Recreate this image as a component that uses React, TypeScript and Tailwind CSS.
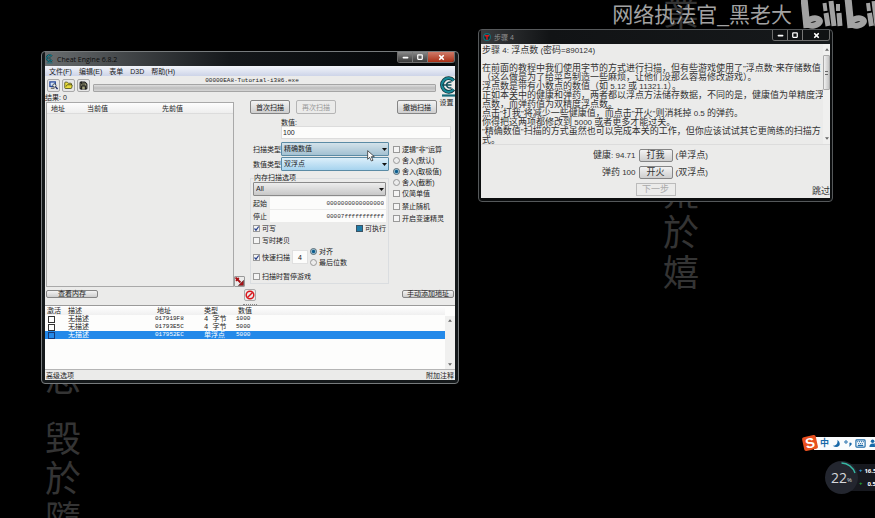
import React, { useState } from 'react'
import { FolderOpen, Save, Keyboard, Minus, Square, X } from 'lucide-react'
import clsx from 'clsx'

type CheckProps = {
  label: string;
  defaultChecked?: boolean;
  filled?: boolean;
};

type RadioProps = {
  label: string;
  name: string;
  defaultChecked?: boolean;
};

type ComboProps = {
  id: string;
  options: string[];
  tone: 'blue' | 'sky' | 'gray';
  label?: string;
};

type Entry = {
  description: string;
  address: string;
  type: string;
  value: string;
};

const entries: Entry[] = [
  { description: '无描述', address: '017919F8', type: '4 字节', value: '1000' },
  { description: '无描述', address: '01793E5C', type: '4 字节', value: '5000' },
  { description: '无描述', address: '017952EC', type: '单浮点', value: '5000' },
]

const tutorialLines = [
  '步骤 4: 浮点数 (密码=890124)',
  '',
  '在前面的教程中我们使用字节的方式进行扫描，但有些游戏使用了"浮点数"来存储数值',
  '（这么做是为了给菜鸟制造一些麻烦，让他们没那么容易修改游戏）。',
  '浮点数是带有小数点的数值（如 5.12 或 11321.1）。',
  '正如本关中的健康和弹药，两者都以浮点方法储存数据，不同的是，健康值为单精度浮',
  '点数，而弹药值为双精度浮点数。',
  '点击"打我"将减少一些健康值，而点击"开火"则消耗掉 0.5 的弹药。',
  '你得把这两项都修改到 5000 或者更多才能过关。',
  '"精确数值"扫描的方式虽然也可以完成本关的工作，但你应该试试其它更简练的扫描方',
  '式。',
]

const comboTones = {
  blue: 'border-[#5b8ba5] bg-linear-to-b from-[#d3e2ea] to-[#a3c1d2]',
  sky: 'border-[#5b8ba5] bg-linear-to-b from-[#dceffa] to-[#a6d3ee]',
  gray: 'border-[#8a8a8a] bg-linear-to-b from-[#ededed] to-[#c8c8c8]',
}

const buttonBase =
  'border border-[#858585] rounded-[2px] bg-linear-to-b from-[#f3f3f3] to-[#cecece] text-center whitespace-nowrap'

// Latin runs are set a step smaller, about half the width of a Chinese glyph
function Mixed({ text }: { text: string }) {
  return (
    <>
      {text.split(/([\x20-\x7e]+)/).map((part, i) =>
        i % 2 ? <span key={i} className="text-[8px]">{part}</span> : part
      )}
    </>
  )
}

function Check({ label, defaultChecked, filled }: CheckProps) {
  return (
    <label className="flex items-center gap-[2px] whitespace-nowrap">
      <span className="grid size-[7px] shrink-0">
        <input
          type="checkbox"
          defaultChecked={defaultChecked}
          className={clsx(
            'peer col-start-1 row-start-1 appearance-none size-[7px] border',
            filled ? 'bg-[#1f7ca8] border-[#3b5364]' : 'bg-[#f4f4f4] border-[#999]'
          )}
        />
        <svg viewBox="0 0 7 7" className="col-start-1 row-start-1 hidden size-[7px] pointer-events-none peer-checked:block">
          <path d="M1.5 3.5 L3 5.2 L5.7 1.5" fill="none" stroke="#27408c" strokeWidth="1.2" />
        </svg>
      </span>
      {label}
    </label>
  )
}

function Radio({ label, name, defaultChecked }: RadioProps) {
  return (
    <label className="flex items-center gap-[2px] whitespace-nowrap">
      <input
        type="radio"
        name={name}
        defaultChecked={defaultChecked}
        className="appearance-none size-[7px] shrink-0 rounded-full border border-[#999] bg-[#ececec] checked:border-[#4e6470] checked:bg-[radial-gradient(circle,#0d5c8c_35%,#b9d8e6_65%)]"
      />
      {label}
    </label>
  )
}

function Combo({ id, options, tone, label }: ComboProps) {
  return (
    <div className="relative flex-1">
      <select
        id={id}
        aria-label={label}
        className={clsx('block w-full h-[14px] appearance-none border rounded-[1px] pl-[2px] leading-[12px]', comboTones[tone])}
      >
        {options.map((option) => (
          <option key={option}>{option}</option>
        ))}
      </select>
      <svg viewBox="0 0 5 3" className="absolute right-[2px] top-[6px] w-[5px] h-[3px] pointer-events-none">
        <path d="M0 0 H5 L2.5 3 Z" fill="#111" />
      </svg>
    </div>
  )
}

function EngineLogo({ className }: { className: string }) {
  const ring = 'M14.6 4.6 A6.6 6.8 0 1 0 14.6 13.4'
  const bars = 'M3 9 H12.5 M12.5 6 Q8 5.5 7.5 9 Q8 12.5 12.5 12'
  return (
    <svg viewBox="0 0 16 22" className={className}>
      <path d={ring} fill="none" stroke="#12313a" strokeWidth="3.8" />
      <path d={ring} fill="none" stroke="#178a98" strokeWidth="2.2" />
      <path d={bars} fill="none" stroke="#12515c" strokeWidth="1.5" />
      <path d="M3 19.5 H16" stroke="#156b7a" strokeWidth="2.2" />
    </svg>
  )
}

function WindowControls({ danger }: { danger?: boolean }) {
  const cell = 'flex items-center justify-center h-[10px] border-r border-[#777]'
  return (
    <div className="flex self-start border border-t-0 border-[#6d6d6d] rounded-b-[3px] overflow-hidden text-white">
      <button aria-label="最小化" className={clsx(cell, 'w-[15px]', danger ? 'bg-linear-to-b from-[#8a8a8a] to-[#3a3a3a]' : 'bg-[#101214]')}>
        <Minus className="size-[7px]" strokeWidth={6} />
      </button>
      <button aria-label="最大化" className={clsx(cell, 'w-[15px]', danger ? 'bg-linear-to-b from-[#8a8a8a] to-[#3a3a3a]' : 'bg-[#101214]')}>
        <Square className="size-[6px]" strokeWidth={5} />
      </button>
      <button aria-label="关闭" className={clsx('flex items-center justify-center h-[10px] w-[26px]', danger ? 'bg-linear-to-b from-[#cf7a68] to-[#a82c10]' : 'bg-[#101214]')}>
        <X className="size-[7px]" strokeWidth={6} />
      </button>
    </div>
  )
}

function ScrollArrow({ up }: { up?: boolean }) {
  return (
    <svg viewBox="0 0 5 3" className="w-[4px] h-[3px]">
      <path d={up ? 'M0 3 H5 L2.5 0 Z' : 'M0 0 H5 L2.5 3 Z'} fill="#666" />
    </svg>
  )
}

function ScanOptions() {
  return (
    <div className="flex-1 pt-[7px] pr-[4px] pb-[3px]">
      <div className="flex items-center pr-[14px]">
        <button className={clsx(buttonBase, 'w-[40px] h-[14px]')}>首次扫描</button>
        <button disabled className="ml-[6px] w-[40px] h-[14px] border border-[#b5b5b5] rounded-[2px] text-[#999]">再次扫描</button>
        <button className={clsx(buttonBase, 'ml-auto w-[40px] h-[14px]')}>撤销扫描</button>
      </div>
      <div className="pl-[31px] pt-[4px]">
        <label htmlFor="value" className="block h-[8px] leading-[9px]">数值:</label>
        <input id="value" defaultValue="100" className="block w-full h-[13px] bg-[#fcfcfb] border border-[#dcdcdc] pl-[1px]" />
      </div>

      <div className="flex gap-[4px] pt-[3px]">
        <div className="w-[139px] flex flex-col">
          <div className="flex items-center">
            <label htmlFor="scan-type" className="w-[31px] pl-[3px] whitespace-nowrap">扫描类型</label>
            <Combo id="scan-type" options={['精确数值']} tone="blue" />
          </div>
          <div className="flex items-center mt-px">
            <label htmlFor="value-type" className="w-[31px] pl-[3px] whitespace-nowrap">数值类型</label>
            <Combo id="value-type" options={['双浮点']} tone="sky" />
          </div>

          <fieldset className="mt-[3px] border border-[#dadde0] px-[2px]">
            <legend className="h-[8px] leading-[8px] ml-px">内存扫描选项</legend>
            <div className="flex">
              <Combo id="region" label="内存扫描选项" options={['All']} tone="gray" />
            </div>
            <div className="flex items-center mt-px">
              <label htmlFor="start" className="w-[17px]">起始</label>
              <input id="start" defaultValue="0000000000000000" className="min-w-0 flex-1 h-[12px] bg-[#fcfcfb] px-[2px] text-right text-[6px] text-[#333] font-['Liberation_Mono',monospace]" />
            </div>
            <div className="flex items-center mt-px">
              <label htmlFor="stop" className="w-[17px]">停止</label>
              <input id="stop" defaultValue="00007fffffffffff" className="min-w-0 flex-1 h-[12px] bg-[#fcfcfb] px-[2px] text-right text-[6px] text-[#333] font-['Liberation_Mono',monospace]" />
            </div>
            <div className="flex items-center justify-between h-[13px]">
              <Check label="可写" defaultChecked />
              <Check label="可执行" filled />
            </div>
            <div className="flex items-center h-[10px]">
              <Check label="写时拷贝" />
            </div>
            <div className="flex items-center h-[24px]">
              <Check label="快速扫描" defaultChecked />
              <input aria-label="对齐值" defaultValue="4" className="ml-[2px] w-[16px] h-[14px] bg-[#fcfcfb] border border-[#e0e0e0] text-center" />
              <div className="ml-[2px]">
                <div className="h-[11px] flex items-center"><Radio name="align" label="对齐" defaultChecked /></div>
                <div className="h-[11px] flex items-center"><Radio name="align" label="最后位数" /></div>
              </div>
            </div>
            <div className="flex items-center h-[14px]">
              <Check label="扫描时暂停游戏" />
            </div>
          </fieldset>
        </div>

        <div className="pt-[2px] *:h-[11px]">
          <Check label='逻辑"非"运算' />
          <Radio name="rounding" label="舍入(默认)" />
          <Radio name="rounding" label="舍入(取极值)" defaultChecked />
          <Radio name="rounding" label="舍入(截断)" />
          <Check label="仅简单值" />
          <div className="mt-[3px]"><Check label="禁止随机" /></div>
          <Check label="开启变速精灵" />
        </div>
      </div>
    </div>
  )
}

function AddressList() {
  const [selected, setSelected] = useState(2)

  return (
    <div className="flex h-[63px] bg-[#fdfdfc]">
      <div className="flex-1">
        <table className="w-full table-fixed border-collapse leading-[8px]">
          <thead>
            <tr className="h-[9px] text-left bg-linear-to-b from-white to-[#f0f0f0]">
              <th className="w-[23px] pl-[2px] font-normal whitespace-nowrap">激活</th>
              <th className="w-[87px] font-normal">描述</th>
              <th className="w-[49px] pl-[2px] font-normal">地址</th>
              <th className="w-[32px] font-normal">类型</th>
              <th className="pl-[2px] font-normal">数值</th>
            </tr>
          </thead>
          <tbody>
            {entries.map((entry, i) => (
              <tr
                key={entry.address}
                onClick={() => setSelected(i)}
                className={clsx('h-[8px]', selected === i && 'bg-[#2389e9] text-white')}
              >
                <td className="pl-[3px] align-middle">
                  <input
                    type="checkbox"
                    aria-label={entry.address}
                    className={clsx('block appearance-none size-[7px] border', selected === i ? 'border-[#163a78]' : 'border-[#333]')}
                  />
                </td>
                <td>{entry.description}</td>
                <td className="text-[6px] font-['Liberation_Mono',monospace]">{entry.address}</td>
                <td className="whitespace-nowrap font-['Liberation_Mono','Noto_Sans_CJK_SC',monospace]">{entry.type}</td>
                <td className="text-[6px] font-['Liberation_Mono',monospace]">{entry.value}</td>
              </tr>
            ))}
          </tbody>
        </table>
      </div>
      <div className="w-[10px] mt-[10px] bg-[#f0f0ef] flex flex-col items-center justify-between py-[3px]">
        <ScrollArrow up />
        <ScrollArrow />
      </div>
    </div>
  )
}

function CheatEngineWindow() {
  const tool = 'flex items-center justify-center size-[13px] border border-[#a9a9a9] rounded-[2px] bg-[#e6e6e6]'
  return (
    <section className="absolute left-[41px] top-[51px] w-[418px] rounded-[4px] border border-[#777b7d] bg-[#15191b] px-[3px] pb-[3px] text-[7px] leading-[9px] text-[#222]">
      <header className="flex items-center h-[14px] bg-linear-to-r from-[#6a6e70] via-[#15181b] via-45% to-[#030405]">
        <EngineLogo className="w-[8px] h-[10px]" />
        <h1 className="ml-[4px] flex-1 text-[7px] text-[#0c0c0c] font-['Open_Sans',sans-serif]">Cheat Engine 6.8.2</h1>
        <WindowControls danger />
      </header>

      <div className="bg-[#ebebea]">
        <nav className="flex items-center gap-[7px] h-[10px] pl-[4px] bg-linear-to-b from-[#f3f5fa] to-[#cdd4e8]">
          <button>文件(F)</button>
          <button>编辑(E)</button>
          <button>表单</button>
          <button>D3D</button>
          <button>帮助(H)</button>
        </nav>

        <div className="flex items-start h-[17px] pl-[2px]">
          <div className="flex gap-[2px] pt-[3px]">
            <button aria-label="选择进程" className={tool}>
              <svg viewBox="0 0 10 10" className="size-[9px]">
                <rect x="1" y="1" width="6" height="5" fill="#cfe0f6" stroke="#25479b" strokeWidth="1.4" />
                <path d="M2 8 H6" stroke="#333" />
                <circle cx="6" cy="5" r="1.8" fill="#e9f5ff" stroke="#222" strokeWidth="0.8" />
                <path d="M7.4 6.5 L9.5 9" stroke="#1b2c6b" strokeWidth="1.6" />
              </svg>
            </button>
            <button aria-label="打开" className={tool}>
              <FolderOpen className="size-[9px] text-[#3b3d11]" fill="#e9dc3c" strokeWidth={2} />
            </button>
            <button aria-label="保存" className={tool}>
              <Save className="size-[9px] text-[#1c1c1c]" fill="#a3a27a" strokeWidth={3} />
            </button>
          </div>
          <div className="flex-1 ml-[3px]">
            <p className="h-[8px] pr-[25px] text-center text-[6px] leading-[9px] font-['Liberation_Mono',monospace]">00000EA8-Tutorial-i386.exe</p>
            <div className="h-[8px] border border-[#a5a5a5] rounded-[1px] bg-linear-to-b from-[#dedede] via-[#bdbdbd] to-[#d5d5d5]" />
          </div>
          <button className="ml-[2px] -mb-[14px] w-[17px] flex flex-col items-center">
            <EngineLogo className="w-[16px] h-[22px]" />
            <span className="text-[7px] leading-[9px] whitespace-nowrap">设置</span>
          </button>
        </div>

        <div className="flex">
          <div className="w-[189px] flex flex-col">
            <p className="h-[9px]">结果: 0</p>
            <div className="flex-1 ml-px border border-[#a9a9a9] bg-[#ebebea]">
              <div className="flex items-center h-[11px] bg-linear-to-b from-[#fdfdfd] to-[#eeeeee] border-b border-[#dcdcdc]">
                <span className="w-[40px] pl-[4px]">地址</span>
                <span className="w-[75px]">当前值</span>
                <span>先前值</span>
              </div>
            </div>
          </div>
          <button aria-label="添加到列表" className="self-end mr-[5px] flex items-center justify-center size-[11px] border border-[#999] rounded-[1px]">
            <svg viewBox="0 0 9 9" className="size-[9px]">
              <path d="M0.5 0.5 L5.5 5.5 M1 3.8 L3.8 1" stroke="#a80f14" strokeWidth="1.8" />
              <path d="M8.6 8.6 V3.3 L3.3 8.6 Z" fill="#a80f14" stroke="#222" strokeWidth="0.4" />
            </svg>
          </button>
          <ScanOptions />
        </div>

        <div className="flex items-start h-[17px] pt-[3px] pr-px pl-px">
          <button className={clsx(buttonBase, 'w-[52px] h-[8px] leading-[6px]')}>查看内存</button>
          <button aria-label="清空列表" className="ml-[146px] -mt-px flex items-center justify-center size-[12px] border border-[#aaa] rounded-[2px]">
            <svg viewBox="0 0 10 10" className="size-[10px]">
              <circle cx="5" cy="5" r="3.8" fill="none" stroke="#d8171d" strokeWidth="1.5" />
              <path d="M2.5 7.5 L7.5 2.5" stroke="#d8171d" strokeWidth="1.5" />
            </svg>
          </button>
          <button className={clsx(buttonBase, 'ml-auto w-[52px] h-[8px] leading-[6px]')}>手动添加地址</button>
        </div>
        <div className="flex justify-center h-[2px] border-b border-[#9a9a9a]">
          <span className="w-[14px] border-t border-dotted border-[#888]" />
        </div>

        <AddressList />

        <footer className="flex items-center justify-between h-[11px] border-t border-[#b5b5b5] px-px">
          <button>高级选项</button>
          <button>附加注释</button>
        </footer>
      </div>
    </section>
  )
}

function TutorialWindow() {
  const [health, setHealth] = useState(94.71)
  const [ammo, setAmmo] = useState(100)

  return (
    <section className="absolute left-[478px] top-[29px] w-[355px] rounded-[4px] border border-[#55585a] bg-[#0b0d0e] px-[2px] pb-[3px] text-[9px] leading-[9px] text-[#333]">
      <header className="flex items-center h-[14px] pl-[2px] bg-linear-to-r from-[#3a3c3e] via-[#111315] via-20% to-[#16191b]">
        <svg viewBox="0 0 9 9" className="size-[8px]">
          <circle cx="4.5" cy="4.5" r="3.8" fill="#082f35" stroke="#17707a" strokeWidth="1.2" />
          <path d="M2 3 H7 M4.5 3 V7.5" stroke="#e01818" strokeWidth="1.6" />
        </svg>
        <h2 className="ml-[3px] flex-1 text-[7px] text-[#909090]">步骤 4</h2>
        <WindowControls />
      </header>

      <div className="bg-[#ebebea]">
        <div className="flex h-[101px] border-b border-[#dcdcdc]">
          <div className="flex-1 w-0 pt-[2px] pl-px whitespace-nowrap">
            {tutorialLines.map((line, i) => (
              <p key={i} className="h-[9px]"><Mixed text={line} /></p>
            ))}
          </div>
          <div className="w-[7px] flex flex-col items-center py-[4px] bg-[#f0f0ef]">
            <ScrollArrow up />
            <div className="mt-[4px] mb-auto w-full h-[35px] flex items-center justify-center border border-[#aaa] rounded-[1px] bg-linear-to-r from-[#f0f0f0] to-[#c4c4c4]">
              <span className="w-[3px] h-[4px] border-y border-[#666]" />
            </div>
            <ScrollArrow />
          </div>
        </div>

        <div className="grid grid-cols-[1fr_34px_1fr] items-center gap-x-[3px] gap-y-[4px] pt-[4px]">
          <span className="text-right"><Mixed text={`健康: ${health}`} /></span>
          <button className={clsx(buttonBase, 'h-[13px]')} onClick={() => setHealth(health - 1)}>打我</button>
          <span><Mixed text="(单浮点)" /></span>
          <span className="text-right"><Mixed text={`弹药 ${ammo}`} /></span>
          <button className={clsx(buttonBase, 'h-[13px]')} onClick={() => setAmmo(ammo - 0.5)}>开火</button>
          <span><Mixed text="(双浮点)" /></span>
        </div>
        <div className="grid grid-cols-[1fr_40px_1fr] pt-[4px] pb-[2px]">
          <button disabled className="col-start-2 h-[13px] border border-[#bbb] text-[#aaa]">下一步</button>
          <button className="self-end justify-self-end">跳过</button>
        </div>
      </div>
    </section>
  )
}

function Wallpaper() {
  const column = "absolute flex flex-col text-[36px] leading-[40px] text-[#343434] font-['Noto_Sans_CJK_TC',sans-serif] select-none"
  return (
    <div aria-hidden="true">
      <div className={clsx(column, 'left-[663px] -top-[10px]')}>
        <span>業</span>
        <span>精</span>
        <span>於</span>
        <span className="mb-[20px]">勤</span>
        <span>荒</span>
        <span>於</span>
        <span>嬉</span>
      </div>
      <div className={clsx(column, 'left-[45px] top-[356px]')}>
        <span className="mb-[20px]">思</span>
        <span>毀</span>
        <span>於</span>
        <span>隨</span>
      </div>
    </div>
  )
}

function Watermark() {
  return (
    <div className="absolute right-0 top-0 flex items-start gap-[9px] text-[#a2a2a2]">
      <span className="pt-px text-[21px] leading-[28px] whitespace-nowrap">网络执法官_黑老大</span>
      <svg viewBox="0 0 74 32" className="w-[74px] h-[32px]" role="img" aria-label="bilibili">
        <g fill="none" stroke="currentColor" strokeLinecap="butt">
          <line x1="3" y1="-2" x2="6" y2="28" strokeWidth="7" />
          <ellipse cx="12.5" cy="22" rx="6.5" ry="3.5" strokeWidth="6" transform="rotate(-10 12.5 22)" />
          <line x1="23.5" y1="3" x2="24.5" y2="11" strokeWidth="4" />
          <line x1="25" y1="13" x2="27" y2="26" strokeWidth="5" />
          <line x1="30" y1="1" x2="33" y2="26" strokeWidth="5" />
          <line x1="37" y1="4" x2="37" y2="11" strokeWidth="4" />
          <line x1="38" y1="13" x2="39" y2="26" strokeWidth="5" />
          <line x1="47" y1="-2" x2="50" y2="28" strokeWidth="7" />
          <ellipse cx="56.5" cy="22" rx="6.5" ry="3.5" strokeWidth="6" transform="rotate(-10 56.5 22)" />
          <line x1="67" y1="3" x2="68" y2="11" strokeWidth="4" />
          <line x1="68.5" y1="13" x2="70.5" y2="26" strokeWidth="5" />
          <line x1="73" y1="1" x2="76" y2="26" strokeWidth="5" />
        </g>
      </svg>
    </div>
  )
}

function InputMethodBar() {
  return (
    <div className="absolute right-0 top-[436px] flex items-center">
      <span className="z-10 flex items-center justify-center size-[14px] -rotate-12 rounded-[2px] bg-[#e8501f] text-[14px] font-bold text-white font-['Liberation_Sans',sans-serif]">S</span>
      <div className="-ml-[3px] flex items-center gap-[3px] h-[13px] w-[61px] pl-[6px] overflow-hidden bg-[#fafcfd] text-[#1969a8]">
        <span className="text-[9px] leading-[12px] font-bold">中</span>
        <svg viewBox="0 0 10 10" className="size-[9px] shrink-0">
          <path d="M6 0.8 Q10 4 8 7.5 Q5 10.5 0.8 7.5 Q7 7.5 6 0.8 Z" fill="currentColor" />
        </svg>
        <svg viewBox="0 0 8 8" className="size-[8px] shrink-0">
          <circle cx="2" cy="3" r="1.2" fill="none" stroke="currentColor" />
          <path d="M5.5 4 H7.2 V5.5 L5.5 7.5" fill="currentColor" stroke="currentColor" strokeWidth="0.6" />
        </svg>
        <Keyboard className="size-[11px] shrink-0" strokeWidth={2.5} />
        <svg viewBox="0 0 10 10" className="size-[9px] shrink-0">
          <circle cx="4" cy="2.5" r="2" fill="currentColor" />
          <path d="M0.5 9 Q0.5 5 4 5 Q9 5 9 9 Z" fill="currentColor" />
          <circle cx="7.5" cy="6.5" r="1.6" fill="#fff" stroke="currentColor" />
        </svg>
      </div>
    </div>
  )
}

function SpeedBall() {
  return (
    <div className="absolute right-0 top-[461px] flex items-center text-white font-['Open_Sans',sans-serif]">
      <div className="relative flex items-center justify-center size-[33px] rounded-full bg-[#23262f] z-10">
        <svg viewBox="0 0 33 33" className="absolute inset-0">
          <path d="M16.5 2 A14.5 14.5 0 0 1 30 12" fill="none" stroke="#36b8a4" strokeWidth="1.4" />
        </svg>
        <span className="text-[14px] leading-[16px] text-[#d5d7dc]">22</span>
        <span className="pt-[4px] text-[6px] leading-[6px] text-[#d5d7dc]">%</span>
      </div>
      <div className="-ml-[8px] w-[25px] h-[27px] overflow-hidden bg-[#17191f] pl-[9px] flex flex-col justify-around text-[6px] leading-[8px]">
        <div className="flex items-center gap-[2px] whitespace-nowrap"><b className="text-[#32a8e8]">+</b><b>16.5</b></div>
        <div className="flex items-center gap-[5px] whitespace-nowrap"><b className="text-[#26b036]">+</b><b>0.5</b></div>
      </div>
    </div>
  )
}

export default function App() {
  return (
    <main className="relative min-h-screen w-full overflow-hidden bg-black font-['Liberation_Sans','Noto_Sans_CJK_SC',sans-serif]">
      <Wallpaper />
      <Watermark />
      <CheatEngineWindow />
      <TutorialWindow />
      <InputMethodBar />
      <SpeedBall />
      <svg viewBox="0 0 12 18" className="absolute left-[367px] top-[150px] w-[8px] h-[12px] pointer-events-none">
        <path d="M1 1 V14 L4 11 L6.5 16.5 L9 15.5 L6.5 10 H11 Z" fill="#fff" stroke="#333" strokeWidth="1.2" />
      </svg>
    </main>
  )
}
